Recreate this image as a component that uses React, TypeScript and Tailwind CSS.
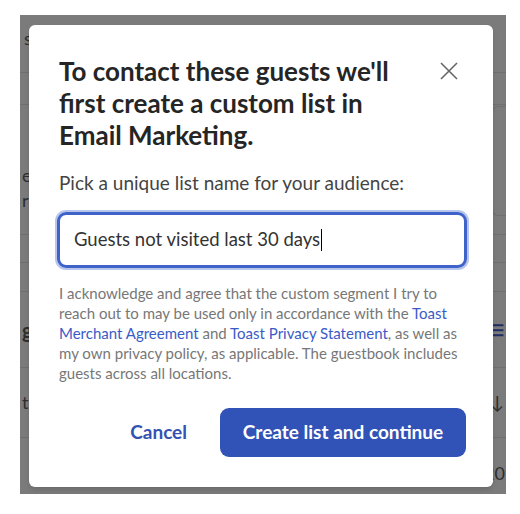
import React from "react";

function BackgroundPage() {
  return (
    <div className="flex flex-col text-[#2e2e2e]">
      <div className="h-[58px] border-b border-[#6f6f6f] px-1 pt-[10px] text-[18px]">s</div>
      <div className="h-[32px] border-b border-[#6f6f6f]" />
      <div className="h-[130px] border-b border-[#6f6f6f] flex justify-between">
        <div className="pt-[58px] pl-[2px] text-[18px] leading-[25px]">
          <div>e</div>
          <div>r</div>
        </div>
        <div className="mt-[1px] mb-[18px] w-[14px] rounded-l-md border border-r-0 border-[#6f6f6f]" />
      </div>
      <div className="h-[28px] border-b border-[#6f6f6f]" />
      <div className="h-[29px] border-b border-[#6f6f6f]" />
      <div className="h-[76px] border-b border-[#6f6f6f] flex justify-between items-center px-[2px]">
        <span className="font-bold text-[20px]">g</span>
        <span className="text-[#1f2f66] text-[16px] font-bold">☰</span>
      </div>
      <div className="h-[70px] border-b border-[#6f6f6f] flex justify-between items-center px-[2px]">
        <span className="text-[18px]">t</span>
        <span className="text-[18px]">↓</span>
      </div>
      <div className="h-[56px] flex justify-end items-start pt-[22px] text-[18px] pr-[1px]">20</div>
    </div>
  );
}

export default function App() {
  return (
    <div
      className="w-[520px] h-[514px] bg-white pt-[15px] pl-[20px]"
      style={{ fontFamily: "Lato, 'Open Sans', sans-serif" }}
    >
      <div className="relative w-[486px] h-[479px] bg-[#7b7b7b] overflow-hidden">
        <BackgroundPage />

        {/* MODAL */}
        <div className="absolute left-[9px] top-[10px] w-[464px] h-[462px] bg-white rounded-[6px] shadow-md pl-[30px] pr-[27px] pt-[30px]">
          <div className="flex justify-between">
            <h2 className="text-[26px] leading-[32px] font-bold text-[#252525] w-[350px]">
              To contact these guests we'll first create a custom list in Email Marketing.
            </h2>
            <button className="mt-[6px] mr-[7px] w-[20px] h-[20px] text-[#666]">
              <svg viewBox="0 0 20 20" className="w-[20px] h-[20px]" fill="none" stroke="currentColor" strokeWidth="1.6">
                <path d="M2 2 L18 18 M18 2 L2 18" />
              </svg>
            </button>
          </div>

          <p className="mt-[20px] text-[19px] leading-[24px] text-[#444]">
            Pick a unique list name for your audience:
          </p>

          {/* INPUT */}
          <div className="mt-[17px] -ml-[2px] w-[410px] h-[56px] rounded-[9px] border-[3px] border-[#3f63c8] ring-[2px] ring-[#b7c6ec] flex items-center pl-[14px] text-[18.5px] text-[#333]">
            Guests not visited last 30 days
            <span className="inline-block w-[1px] h-[22px] bg-black ml-[1px]" />
          </div>

          <p className="mt-[15px] text-[15px] leading-[20px] text-[#777] w-[405px]">
            I acknowledge and agree that the custom segment I try to reach out to may be used only in accordance with
            the <a className="text-[#3a5bc7]">Toast</a>
            <br />
            <a className="text-[#3a5bc7]">Merchant Agreement</a> and{" "}
            <a className="text-[#3a5bc7]">Toast Privacy Statement</a>, as well as my own privacy policy, as applicable.
            The guestbook includes guests across all locations.
          </p>

          {/* BUTTONS */}
          <div className="mt-[25px] flex justify-end items-center gap-[21px]">
            <button className="text-[19px] font-bold text-[#3452b4] px-[12px]">Cancel</button>
            <button className="w-[246px] h-[49px] rounded-[9px] bg-[#3152b6] text-white text-[19px] font-bold">
              Create list and continue
            </button>
          </div>
        </div>
      </div>
    </div>
  );
}
